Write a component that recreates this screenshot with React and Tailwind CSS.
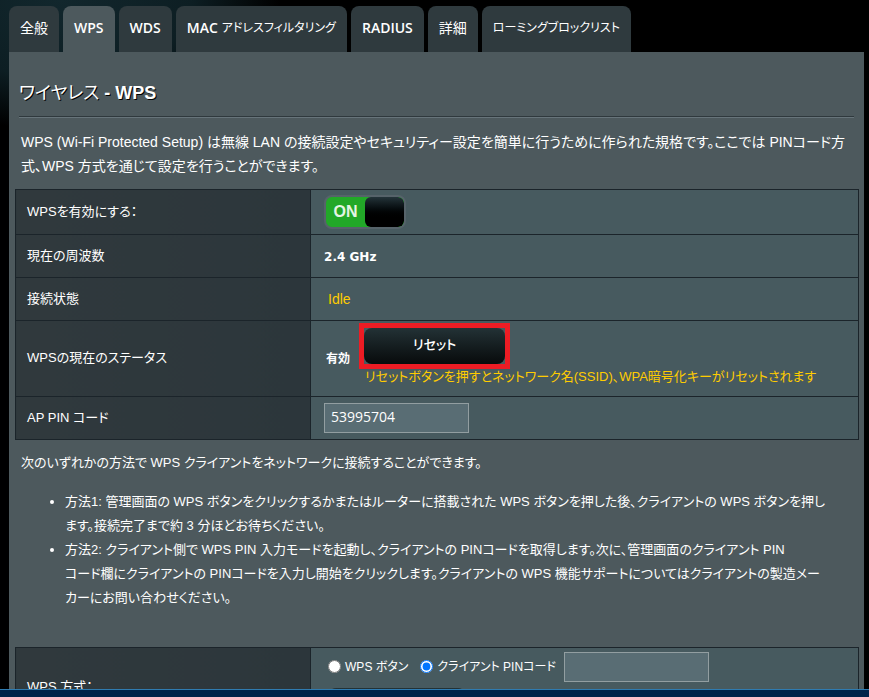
import React, { useState } from "react";

const tabs = [
  { label: "全般" },
  { label: "WPS", latin: true, active: true },
  { label: "WDS", latin: true },
  { label: "MAC", latin: true, kana: "アドレスフィルタリング" },
  { label: "RADIUS", latin: true },
  { label: "詳細" },
  { kana: "ローミングブロックリスト" },
];

const Row = ({ label, htmlFor, height, children }) => (
  <tr className={height}>
    <th
      scope="row"
      className="w-[35%] border border-[#1b242a] bg-linear-to-r from-[#30393d] to-[#2c363b] px-[11px] text-left text-[13px] font-normal"
    >
      {htmlFor ? <label htmlFor={htmlFor}>{label}</label> : label}
    </th>
    <td className="border border-[#1b242a] bg-[#475a5f] px-[13px]">{children}</td>
  </tr>
);

const App = () => {
  const [enabled, setEnabled] = useState(true);
  const [method, setMethod] = useState("pin");
  const [pin, setPin] = useState("");

  return (
    <div className="flex h-screen flex-col overflow-hidden bg-black bg-[radial-gradient(ellipse_220px_130px_at_60px_0px,#12272d_0%,#0d1e23_60%,#000_100%)] bg-no-repeat font-['Liberation_Sans','Noto_Sans_CJK_JP',sans-serif] text-white [font-feature-settings:'palt']">
      <div className="min-h-0 flex-1 overflow-hidden pt-[6px] pr-[5px] pl-[9px]">
        {/* Tabs */}
        <nav className="flex gap-1 font-['Open_Sans','Noto_Sans_CJK_JP',sans-serif] text-sm">
          {tabs.map((tab) => (
            <a
              key={tab.label || tab.kana}
              href="#"
              className={`flex h-[46px] items-center gap-1 rounded-t-lg px-[11px] pb-[3px] whitespace-nowrap ${
                tab.active ? "bg-[#4d595d]" : "bg-[#2f3a3e]"
              }`}
            >
              {tab.label && <span className={tab.latin ? "font-semibold" : "font-normal"}>{tab.label}</span>}
              {tab.kana && <span className="text-xs">{tab.kana}</span>}
            </a>
          ))}
        </nav>

        {/* Panel */}
        <main className="bg-[#4d595d] pt-[29px] pr-[5px] pl-[6px] text-sm">
          <h1 className="px-1 text-lg leading-6 font-bold [text-shadow:1px_1px_0_#000]">
            <span className="font-normal">ワイヤレス</span> - WPS
          </h1>
          <hr className="mr-[5px] ml-1 mt-[11px] h-[2px] border-t border-b border-t-[#2f393d] border-b-[#67747a]" />

          <p className="mt-3 mb-[11px] px-[6px] leading-6">
            WPS (Wi-Fi Protected Setup) は無線 LAN の接続設定やセキュリティー設定を簡単に行うために作られた規格です。ここでは PINコード方
            <br />
            式、WPS 方式を通じて設定を行うことができます。
          </p>

          <table className="w-full table-fixed border-collapse">
            <tbody>
              <Row label="WPSを有効にする：" height="h-[45px]">
                <button
                  type="button"
                  role="switch"
                  aria-checked={enabled}
                  aria-label="WPSを有効にする"
                  onClick={() => setEnabled(!enabled)}
                  className="flex h-[34px] w-[82px] items-stretch overflow-hidden rounded-lg border-2 border-[#56636a] bg-[#22a828]"
                >
                  <span className="flex flex-1 items-center justify-center text-base font-bold text-[#e4f4e4]">ON</span>
                  <span className="w-[39px] rounded-md bg-linear-to-b from-[#24343a] to-black to-75%" />
                </button>
              </Row>
              <Row label="現在の周波数" height="h-[43px]">
                <span className="font-['DejaVu_Sans',sans-serif] text-xs font-bold">2.4 GHz</span>
              </Row>
              <Row label="接続状態" height="h-[43px]">
                <span className="px-1 text-sm text-[#ffcc00]">Idle</span>
              </Row>
              <Row label="WPSの現在のステータス" height="h-[76px]">
                <div className="flex items-center pl-[2px]">
                  <span className="w-[33px] shrink-0 text-xs font-bold">有効</span>
                  <div className="flex flex-col items-start pb-[10px]">
                    <button
                      type="button"
                      className="h-[46px] w-[151px] border-[5px] border-[#ed1c24] bg-[#475a5f]"
                    >
                      <span className="flex h-full items-center justify-center rounded-lg bg-linear-to-b from-[#233236] to-[#080b0c] text-[13px] font-medium">
                        リセット
                      </span>
                    </button>
                    <span className="px-[6px] text-[13px] leading-4 text-[#ffcc00]">
                      リセットボタンを押すとネットワーク名(SSID)、WPA暗号化キーがリセットされます
                    </span>
                  </div>
                </div>
              </Row>
              <Row label="AP PIN コード" htmlFor="ap-pin" height="h-[43px]">
                <input
                  id="ap-pin"
                  readOnly
                  value="53995704"
                  className="block h-[30px] w-[145px] border border-[#929ea1] bg-[#596d74] px-[6px] pb-[3px] font-['Open_Sans',sans-serif] text-sm"
                />
              </Row>
            </tbody>
          </table>

          <p className="mt-[11px] px-[6px] text-[13px] leading-6">
            次のいずれかの方法で WPS クライアントをネットワークに接続することができます。
          </p>
          <ul className="mt-[15px] mr-4 mb-[37px] ml-[50px] list-disc text-[13px] leading-6">
            <li>
              方法1: 管理画面の WPS ボタンをクリックするかまたはルーターに搭載された WPS ボタンを押した後、クライアントの WPS ボタンを押し
              <br />
              ます。接続完了まで約 3 分ほどお待ちください。
            </li>
            <li>
              方法2: クライアント側で WPS PIN 入力モードを起動し、クライアントの PINコードを取得します。次に、管理画面のクライアント PIN
              <br />
              コード欄にクライアントの PINコードを入力し開始をクリックします。クライアントの WPS 機能サポートについてはクライアントの製造メー
              <br />
              カーにお問い合わせください。
            </li>
          </ul>

          <table className="w-full table-fixed border-collapse">
            <tbody>
              <Row label="WPS 方式：" height="h-20">
                <div className="flex h-[72px] flex-col gap-[6px]">
                  <div className="flex items-center gap-1 pl-1 text-xs">
                    <input
                      id="method-button"
                      type="radio"
                      name="method"
                      checked={method === "button"}
                      onChange={() => setMethod("button")}
                    />
                    <label htmlFor="method-button" className="mr-2">WPS ボタン</label>
                    <input
                      id="method-pin"
                      type="radio"
                      name="method"
                      checked={method === "pin"}
                      onChange={() => setMethod("pin")}
                    />
                    <label htmlFor="method-pin">クライアント PINコード</label>
                    <input
                      aria-label="クライアント PINコード"
                      value={pin}
                      onChange={(e) => setPin(e.target.value)}
                      className="ml-1 h-[30px] w-[145px] border border-[#929ea1] bg-[#596d74] px-[6px]"
                    />
                  </div>
                  <button
                    type="button"
                    aria-label="開始"
                    className="ml-1 h-9 w-[138px] rounded-lg bg-linear-to-b from-[#233236] to-[#080b0c]"
                  />
                </div>
              </Row>
            </tbody>
          </table>
        </main>
      </div>

      {/* Taskbar edge */}
      <footer className="h-2 shrink-0 border-t border-[#2f7bb0] bg-[#02234a]" />
    </div>
  );
};

export default App;
